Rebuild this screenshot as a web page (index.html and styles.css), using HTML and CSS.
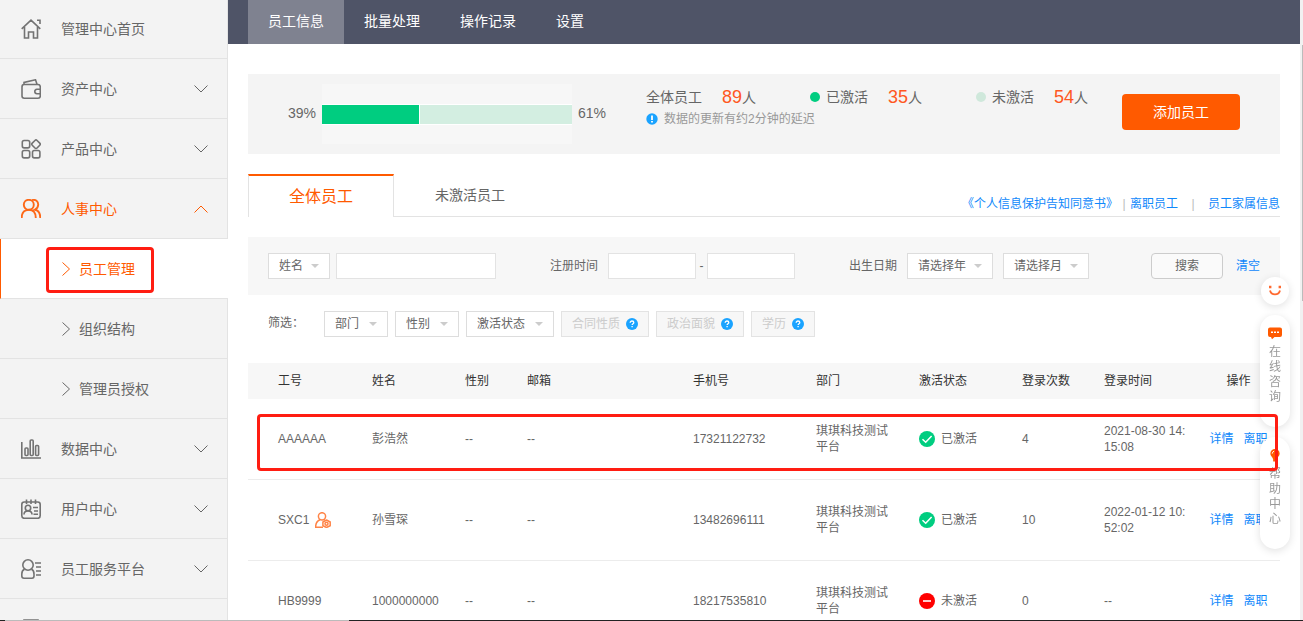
FILE: index.html
```html
<!DOCTYPE html>
<html lang="zh-CN">
<head>
<meta charset="utf-8">
<title>员工管理</title>
<link rel="stylesheet" href="styles.css">
</head>
<body>
<svg class="defs" aria-hidden="true">
  <symbol id="down" viewBox="0 0 14 8"><path d="M.5 .5 7 7 13.5 .5"/></symbol>
  <symbol id="right" viewBox="0 0 8 14"><path d="M.5 .5 7.5 7 .5 13.5"/></symbol>
  <symbol id="ok" viewBox="0 0 16 16"><circle cx="8" cy="8" r="8" fill="#00cd80" stroke="none"/><path d="M3.5 8.2 6.7 11.3 12.6 5" fill="none" stroke="#fff" stroke-width="1.5"/></symbol>
  <symbol id="no" viewBox="0 0 16 16"><circle cx="8" cy="8" r="8" fill="#f00" stroke="none"/><path d="M4 8H12" stroke="#fff" stroke-width="1.6"/></symbol>
  <symbol id="help" viewBox="0 0 12 12"><circle cx="6" cy="6" r="6" fill="#1aa3ff"/><path d="M4.2 4.7C4.2 3.5 5 3 6 3S7.8 3.6 7.8 4.5C7.8 5.7 6.1 5.7 6.1 7.1M6.1 8V9.2" fill="none" stroke="#fff" stroke-width="1.3"/></symbol>
</svg>
<div class="app">
  <nav class="side">
    <a class="item first" href="#"><svg class="ico" viewBox="0 0 20 20"><path d="M.7 9.8 10 1.2 19.3 9.8M3.500 8V19H7.500V13H12.500V19H16.500V8M16 1.200H19V5"/></svg><span>管理中心首页</span></a>
    <a class="item" href="#"><svg class="ico" viewBox="0 0 20 20"><path d="M3 5.500H17Q19.300 5.500 19.300 8V17Q19.300 19.200 17 19.200H3.300Q1 19.200 1 17V8Q1 5.500 3 5.500ZM3 5.300V3.500L14.500 .8 16 5.300M19.300 10.200H16Q13.800 10.400 13.800 12.500T16 14.800H19.300"/></svg><span>资产中心</span><svg class="arrow"><use href="#down"/></svg></a>
    <a class="item" href="#"><svg class="ico" viewBox="0 0 20 20"><rect x="1.300" y="1.500" width="7.400" height="7.400" rx="1.800"/><rect x="1.300" y="11.500" width="7.400" height="7.400" rx="1.800"/><rect x="11.500" y="11.500" width="7.400" height="7.400" rx="1.800"/><rect x="11.600" y="1.800" width="6.800" height="6.800" rx="1.500" transform="rotate(45 15 5.200)"/></svg><span>产品中心</span><svg class="arrow"><use href="#down"/></svg></a>
    <a class="item open" href="#"><svg class="ico bold" viewBox="0 0 20 20"><circle cx="7.800" cy="5.800" r="5"/><path d="M.7 19C.7 13.500 3.500 10.900 7.800 10.900S14.800 13.500 14.800 19M11.200 1.100C14.500 0 17.400 2.400 17.200 5.800 17.100 8 16 9.700 14 10.700 17.500 11.500 19.300 14.400 19.300 19"/></svg><span>人事中心</span><svg class="arrow up"><use href="#down"/></svg></a>
    <a class="item sub current" href="#"><svg class="chev"><use href="#right"/></svg><span>员工管理</span></a>
    <a class="item sub" href="#"><svg class="chev"><use href="#right"/></svg><span>组织结构</span></a>
    <a class="item sub" href="#"><svg class="chev"><use href="#right"/></svg><span>管理员授权</span></a>
    <a class="item" href="#"><svg class="ico" viewBox="0 0 20 20"><path d="M.8 3V19H20"/><rect x="4" y="9" width="3" height="7.500" rx="1"/><rect x="9.200" y="1" width="3" height="15.500" rx="1"/><rect x="14.600" y="6.500" width="3" height="10" rx="1"/></svg><span>数据中心</span><svg class="arrow"><use href="#down"/></svg></a>
    <a class="item" href="#"><svg class="ico" viewBox="0 0 20 20"><rect x=".8" y="3" width="18.400" height="16.300" rx="2.500"/><path d="M5.500 .5V5M10 .5V5M14.500 .5V5M3 15.500C3 13 4.500 12 7 12S11 13 11 15.500M12 8.500H17M13 12H17M12.500 15.300H17"/><circle cx="7" cy="9" r="2.700"/></svg><span>用户中心</span><svg class="arrow"><use href="#down"/></svg></a>
    <a class="item" href="#"><svg class="ico" viewBox="0 0 20 20"><circle cx="7" cy="6" r="5.200"/><path d="M3.500 10.200C1.500 11 .8 12.300 .8 15V17Q.8 19.200 3 19.200H11Q13 19.200 13 17V15C13 12.300 12.400 11 10.500 10.200M14 4H20M15 8H20M15 12H20M15 16H20"/></svg><span>员工服务平台</span><svg class="arrow"><use href="#down"/></svg></a>
    <a class="item" href="#" aria-label="更多"><svg class="ico" viewBox="0 0 20 20"><path d="M3 1H17V19H3Z"/></svg></a>
    <div class="mark mark-nav"></div>
  </nav>

  <div class="page">
    <nav class="top">
      <a class="on" href="#">员工信息</a><a href="#">批量处理</a><a href="#">操作记录</a><a href="#">设置</a>
    </nav>
    <main class="content">
      <section class="summary">
        <span class="pct">39%</span>
        <div class="chart"><div class="bar"><i class="done" style="flex-grow:39"></i><i class="rest" style="flex-grow:61"></i></div></div>
        <span class="pct">61%</span>
        <div class="stats">
          <div class="stat-row">
            <p class="stat"><span>全体员工</span><span><b>89</b>人</span></p>
            <p class="stat"><span class="key"><i class="dot"></i>已激活</span><span><b>35</b>人</span></p>
            <p class="stat"><span class="key"><i class="dot pale"></i>未激活</span><span><b>54</b>人</span></p>
          </div>
          <p class="note"><svg viewBox="0 0 12 12"><circle cx="6" cy="6" r="5.700" fill="#1aa3ff"/><path d="M6 2.400V7M6 8V9.600" stroke="#fff" stroke-width="1.800"/></svg>数据的更新有约2分钟的延迟</p>
        </div>
        <button class="add" type="button">添加员工</button>
      </section>

      <div class="tabs">
        <button class="tab on" type="button">全体员工</button>
        <button class="tab" type="button">未激活员工</button>
        <div class="links"><a href="#">《个人信息保护告知同意书》</a><span class="sep">|</span><a href="#">离职员工</a><span class="sep wide">|</span><a href="#">员工家属信息</a></div>
      </div>

      <form class="search">
        <span class="sel w62"><select aria-label="搜索字段"><option>姓名</option></select></span>
        <input class="w160" type="text" aria-label="搜索内容">
        <label class="lab" for="from">注册时间</label>
        <input class="w88" id="from" type="text"><span class="dash">-</span><input class="w88" type="text" aria-label="注册时间结束">
        <label class="lab" for="year">出生日期</label>
        <span class="sel w86"><select id="year"><option>请选择年</option></select></span>
        <span class="sel w86 month"><select aria-label="出生月"><option>请选择月</option></select></span>
        <button class="go" type="button">搜索</button>
        <a class="clear" href="#">清空</a>
      </form>

      <div class="filters">
        <span class="title">筛选：</span>
        <span class="sel w64"><select aria-label="部门"><option>部门</option></select></span>
        <span class="sel w64"><select aria-label="性别"><option>性别</option></select></span>
        <span class="sel w88"><select aria-label="激活状态"><option>激活状态</option></select></span>
        <button class="off w88" type="button" disabled>合同性质<svg><use href="#help"/></svg></button>
        <button class="off w88" type="button" disabled>政治面貌<svg><use href="#help"/></svg></button>
        <button class="off w64" type="button" disabled>学历<svg><use href="#help"/></svg></button>
      </div>

      <div class="list">
        <table>
          <colgroup><col class="c1"><col class="c2"><col class="c3"><col class="c4"><col class="c5"><col class="c6"><col class="c6"><col class="c7"><col class="c6"><col class="c8"></colgroup>
          <thead><tr><th>工号</th><th>姓名</th><th>性别</th><th>邮箱</th><th>手机号</th><th>部门</th><th>激活状态</th><th>登录次数</th><th>登录时间</th><th>操作</th></tr></thead>
          <tbody>
            <tr><td>AAAAAA</td><td>彭浩然</td><td>--</td><td>--</td><td>17321122732</td><td>琪琪科技测试平台</td><td><span class="state"><svg><use href="#ok"/></svg>已激活</span></td><td>4</td><td>2021-08-30 14:15:08</td><td><span class="acts"><a href="#">详情</a><a href="#">离职</a></span></td></tr>
            <tr><td><span class="who">SXC1<svg viewBox="0 0 16 16"><circle cx="7" cy="4.300" r="3.600"/><path d="M5 7.800C2 9 .6 11.500 .6 15.300H8M9 7.600 10 8.200"/><path d="M11.500 8 15.200 10V13.700L11.500 15.500 7.900 13.700V10Z"/><circle cx="11.500" cy="11.800" r="1.500"/></svg></span></td><td>孙雪琛</td><td>--</td><td>--</td><td>13482696111</td><td>琪琪科技测试平台</td><td><span class="state"><svg><use href="#ok"/></svg>已激活</span></td><td>10</td><td>2022-01-12 10:52:02</td><td><span class="acts"><a href="#">详情</a><a href="#">离职</a></span></td></tr>
            <tr><td>HB9999</td><td>1000000000</td><td>--</td><td>--</td><td>18217535810</td><td>琪琪科技测试平台</td><td><span class="state"><svg><use href="#no"/></svg>未激活</span></td><td>0</td><td>--</td><td><span class="acts"><a href="#">详情</a><a href="#">离职</a></span></td></tr>
          </tbody>
        </table>
        <div class="mark mark-row"></div>
      </div>
    </main>
  </div>
  <div class="scroll"><i></i></div>
</div>

<aside class="float">
  <button class="smile" type="button" aria-label="反馈"><svg viewBox="0 0 12 12"><path d="M1.200 .8V3.200M10.800 .8V3.200" stroke-width="2.400"/><path d="M1 5.500C2.500 10.700 9.500 10.700 11 5.500" stroke-width="1.900"/></svg></button>
  <button class="pill" type="button"><svg viewBox="0 0 14 12"><path fill="#ff5a00" d="M2 0H12Q14 0 14 2V7.500Q14 9.500 12 9.500H6.500L4 11.800 3 9.500H2Q0 9.500 0 7.500V2Q0 0 2 0Z"/><path d="M3 4.700H5M6 4.700H8M9 4.700H11" stroke="#fff" stroke-width="1.600"/></svg><span>在线咨询</span></button>
  <button class="pill" type="button"><svg viewBox="0 0 14 14"><path fill="#ff5a00" d="M7 0A5 5 0 0 1 12 5C12 7.500 9.500 8.500 9 11V13.500H5V11C4.500 8.500 2 7.500 2 5A5 5 0 0 1 7 0Z"/><path d="M4 5A3 3 0 0 1 6 2.300" fill="none" stroke="#fff"/></svg><span>帮助中心</span></button>
</aside>
<div class="edge"></div>
</body>
</html>
```

FILE: styles.css
```css
* { box-sizing: border-box; }
body {
  margin: 0;
  color: #666;
  font: 12px/16px "Liberation Sans", Arial, "Noto Sans CJK SC", sans-serif;
  background: #fff;
}
a { color: #0f88fb; text-decoration: none; }
p { margin: 0; }
button, input, select { font: inherit; color: inherit; margin: 0; }
.defs { position: absolute; width: 0; height: 0; }
.app { display: flex; height: 100vh; overflow: hidden; }

.side {
  position: relative;
  flex: none;
  width: 228px;
  background: #f3f3f3;
  border-right: 1px solid #e3e3e3;
  font-size: 14px;
}
.item {
  display: flex;
  align-items: center;
  height: 60px;
  padding: 0 19px 0 21px;
  border-bottom: 1px solid #e3e3e3;
  color: #666;
}
.item svg { fill: none; stroke: currentColor; }
.first { height: 59px; }
.ico { width: 20px; height: 20px; margin-right: 20px; stroke-width: 1.6; opacity: .9; }
.bold { stroke-width: 1.9; }
.arrow { width: 14px; height: 8px; margin-left: auto; }
.up { transform: rotate(180deg); }
.open { color: #ff5a00; }
.sub { padding-left: 62px; }
.chev { width: 8px; height: 14px; margin-right: 9px; }
.current {
  margin-right: -1px;
  padding-left: 61px;
  color: #ff5a00;
  background: #fff;
  border-left: 1px solid #ff5a00;
}
.mark { position: absolute; border: 3px solid #ff1d12; border-radius: 4px; pointer-events: none; }
.mark-nav { left: 46px; top: 247px; width: 108px; height: 46px; }

.page { flex: 1; min-width: 0; }
.top { display: flex; height: 44px; padding-left: 20px; background: #4f5467; font-size: 14px; line-height: 42px; }
.top a { padding: 0 20px; color: #fff; }
.top .on { background: #7f8290; }
.content { padding: 30px 20px 0; }

.summary { display: flex; align-items: flex-start; height: 80px; padding: 10px 40px; background: #f4f4f4; }
.pct { width: 34px; font-size: 14px; line-height: 58px; }
.chart { width: 250px; height: 60px; padding: 20px 0; background: #f7f7f7; }
.chart + .pct { width: 74px; padding-left: 6px; }
.bar { display: flex; gap: 1px; height: 21px; border: solid #fff; border-width: 1px 0; background: #fff; }
.done { background: #00cd80; }
.rest { background: #d3eee1; }
.stat-row { display: flex; gap: 54px; height: 27px; font-size: 14px; line-height: 26px; }
.stat { display: flex; gap: 20px; height: 26px; white-space: nowrap; }
.stat b { color: #ff5722; font-size: 18px; font-weight: 400; }
.key { display: flex; align-items: center; gap: 6px; }
.dot { width: 10px; height: 10px; border-radius: 50%; background: #00cd80; }
.pale { background: #cfe8db; }
.note { display: flex; align-items: center; gap: 6px; color: #999; }
.note svg { width: 12px; height: 12px; }
.add {
  width: 118px; height: 36px; margin: 10px 0 0 auto;
  border: 0; border-radius: 4px; background: #ff5a00; color: #fff; font-size: 14px;
}

.tabs { display: flex; height: 43px; margin-top: 20px; border-bottom: 1px solid #e3e3e3; }
.tab { height: 42px; padding: 0 41px; border: 0; background: none; font-size: 14px; }
.tab.on {
  width: 146px; height: 43px; padding: 0;
  background: #fff; border: 1px solid #e3e3e3; border-top: 2px solid #ff5a00; border-bottom: 0;
  color: #ff5a00; font-size: 16px;
}
.links { display: flex; margin: 22px 0 0 auto; white-space: nowrap; }
.sep { width: 12px; text-align: center; color: #bbb; }
.sep.wide { width: 30px; }

.search { display: flex; align-items: center; height: 58px; margin-top: 20px; padding: 0 20px; background: #f7f7f7; }
.sel { position: relative; display: block; height: 26px; }
.sel::after {
  content: ""; position: absolute; right: 11px; top: 11px;
  border: 4px solid transparent; border-top-color: #ccc; border-bottom: 0;
  pointer-events: none;
}
select {
  display: block; width: 100%; height: 26px; padding: 0 10px;
  appearance: none; border: 1px solid #ddd; border-radius: 0; background: #fff;
}
input { height: 26px; border: 1px solid #e3e3e3; padding: 0 8px; background: #fff; }
.w62 { width: 62px; margin-right: 6px; }
.w64 { width: 64px; }
.w86 { width: 86px; }
.w88 { width: 88px; }
.w160 { width: 160px; }
.lab { margin: 0 10px 0 54px; }
.dash { width: 11px; text-align: center; }
.month { margin-left: 10px; }
.go { width: 72px; height: 26px; margin: 0 13px 0 auto; border: 1px solid #ccc; border-radius: 4px; background: #fafafa; }

.filters { display: flex; gap: 7px; height: 26px; margin-top: 16px; padding-left: 20px; }
.title { width: 49px; line-height: 24px; }
.off {
  display: flex; align-items: center; justify-content: center; gap: 6px;
  height: 26px; padding: 0; border: 1px solid #e3e3e3; background: #f7f7f7; color: #ccc;
}
.off svg { width: 12px; height: 12px; }

.list { position: relative; margin-top: 26px; }
table { width: 100%; table-layout: fixed; border-collapse: separate; border-spacing: 0; }
.c1 { width: 114px; }
.c2 { width: 93px; }
.c3 { width: 62px; }
.c4 { width: 166px; }
.c5 { width: 123px; }
.c6 { width: 103px; }
.c7 { width: 82px; }
.c8 { width: 83px; }
th { height: 36px; padding: 0 10px; background: #f7f7f7; color: #333; font-weight: 400; text-align: left; }
td { height: 81px; padding: 0 10px; border-bottom: 1px solid #ececec; word-break: break-all; }
th:first-child, td:first-child { padding-left: 30px; }
th:last-child, td:last-child { padding: 0; text-align: center; }
.state { display: flex; align-items: center; gap: 6px; }
.state svg { width: 16px; height: 16px; }
.acts { display: flex; justify-content: center; gap: 10px; }
.who { display: flex; align-items: center; gap: 6px; }
.who svg { width: 16px; height: 16px; fill: none; stroke: #ff8447; stroke-width: 1.5; }
.mark-row { left: 9px; right: 2px; top: 51px; height: 57px; z-index: 3; }

.scroll { flex: none; width: 3px; padding: 45px 0 0 2px; background: #f1f1f1; }
.scroll i { display: block; height: 256px; background: #bbb; }

.float {
  position: fixed; top: 277px; right: 13px;
  display: flex; flex-direction: column; align-items: center; gap: 10px;
}
.float button { border: 0; background: #fff; box-shadow: 0 2px 8px rgba(0, 0, 0, .12); color: #999; }
.float .smile { display: grid; place-items: center; width: 28px; height: 28px; border-radius: 50%; padding: 0; }
.smile svg { width: 12px; height: 12px; fill: none; stroke: #ff6a30; }
.pill {
  display: flex; flex-direction: column; align-items: center; gap: 5px;
  width: 30px; height: 112px; padding: 12px 9px 0; border-radius: 15px; line-height: 15px;
}
.pill svg { flex: none; width: 14px; height: 13px; }
.pill span { width: 12px; }
.edge {
  position: fixed; left: 0; right: 0; bottom: 0; z-index: 4; height: 1px;
  background: linear-gradient(90deg, #222 5px, #bbb 5px 349px, #222 349px);
}
```
